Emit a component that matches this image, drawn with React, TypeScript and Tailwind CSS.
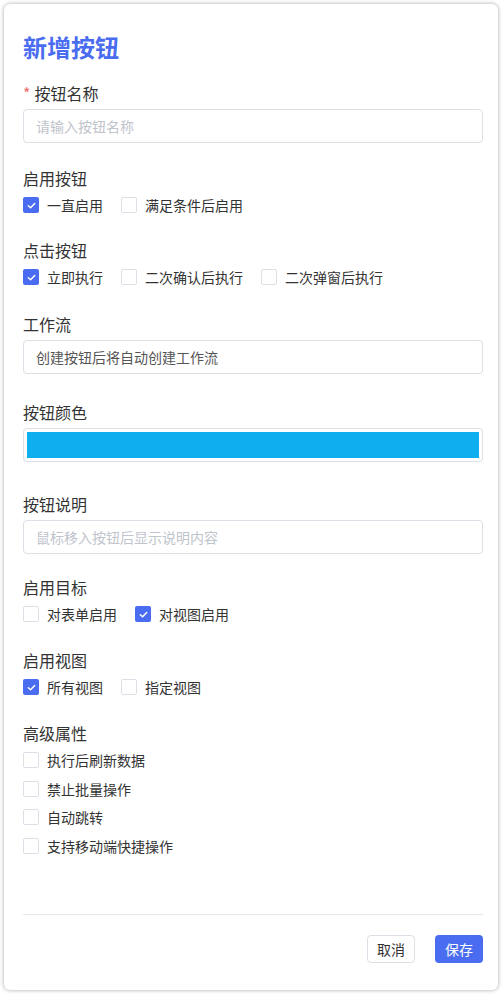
import type { FC, ReactNode } from 'react'

const FONT = "font-['Noto_Sans_CJK_SC','Noto_Sans',sans-serif]"

const CheckBox: FC<{ checked?: boolean; label: string }> = ({ checked, label }) => (
  <label className="flex h-[22px] items-center">
    {checked ? (
      <span className="flex h-4 w-4 items-center justify-center rounded-[2px] bg-[#4a6cf0]">
        <svg viewBox="0 0 12 12" className="h-[11px] w-[11px]" fill="none" stroke="white" strokeWidth="1.6">
          <path d="M2.5 6.2 L5 8.5 L9.5 3.8" strokeLinecap="round" strokeLinejoin="round" />
        </svg>
      </span>
    ) : (
      <span className="h-4 w-4 rounded-[2px] border border-[#dcdfe6] bg-white" />
    )}
    <span className="ml-2 text-[14px] leading-[22px] text-[#333]">{label}</span>
  </label>
)

const Field: FC<{ label: ReactNode; children: ReactNode; className?: string }> = ({
  label,
  children,
  className = 'mb-[23px]',
}) => (
  <div className={className}>
    <div className="mb-1 text-[16px] leading-6 text-[#333]">{label}</div>
    {children}
  </div>
)

const Input: FC<{ placeholder?: string; value?: string }> = ({ placeholder, value }) => (
  <div className="flex h-[34px] items-center rounded border border-[#dcdfe6] px-3 text-[14px]">
    {value ? <span className="text-[#555]">{value}</span> : <span className="text-[#c0c4cc]">{placeholder}</span>}
  </div>
)

const App: FC = () => {
  return (
    <div className={`${FONT} min-h-screen bg-white p-1`}>
      <div className="flex h-[986px] w-[494px] flex-col rounded-md bg-white pb-[27px] pl-[19px] pr-[15px] pt-[27px] shadow-[0_0_4px_rgba(0,0,0,0.35)]">
        <h1 className="mb-[18px] text-[24px] font-bold leading-8 text-[#4a6cf0]">新增按钮</h1>

        <Field
          label={
            <span>
              <span className="mr-1 text-[#f56c6c]">*</span>按钮名称
            </span>
          }
        >
          <Input placeholder="请输入按钮名称" />
        </Field>

        <Field label="启用按钮" className="mb-[22px]">
          <div className="flex gap-[18px]">
            <CheckBox checked label="一直启用" />
            <CheckBox label="满足条件后启用" />
          </div>
        </Field>

        <Field label="点击按钮" className="mb-[24px]">
          <div className="flex gap-[18px]">
            <CheckBox checked label="立即执行" />
            <CheckBox label="二次确认后执行" />
            <CheckBox label="二次弹窗后执行" />
          </div>
        </Field>

        <Field label="工作流" className="mb-[26px]">
          <Input value="创建按钮后将自动创建工作流" />
        </Field>

        <Field label="按钮颜色" className="mb-[30px]">
          <div className="h-[34px] rounded border border-[#dcdfe6] p-[3px]">
            <div className="h-full w-full bg-[#0eaeef]" />
          </div>
        </Field>

        <Field label="按钮说明" className="mb-[21px]">
          <Input placeholder="鼠标移入按钮后显示说明内容" />
        </Field>

        <Field label="启用目标">
          <div className="flex gap-[18px]">
            <CheckBox label="对表单启用" />
            <CheckBox checked label="对视图启用" />
          </div>
        </Field>

        <Field label="启用视图">
          <div className="flex gap-[18px]">
            <CheckBox checked label="所有视图" />
            <CheckBox label="指定视图" />
          </div>
        </Field>

        <Field label="高级属性" className="">
          <div className="flex flex-col gap-[6.7px]">
            <CheckBox label="执行后刷新数据" />
            <CheckBox label="禁止批量操作" />
            <CheckBox label="自动跳转" />
            <CheckBox label="支持移动端快捷操作" />
          </div>
        </Field>

        <div className="mt-auto border-t border-[#e4e7ed] pt-5">
          <div className="flex justify-end gap-5">
            <button className="h-[28px] w-12 rounded border border-[#dcdfe6] bg-white text-[14px] text-[#333]">
              取消
            </button>
            <button className="h-[28px] w-12 rounded bg-[#4a6cf0] text-[14px] text-white">保存</button>
          </div>
        </div>
      </div>
    </div>
  )
}

export default App
